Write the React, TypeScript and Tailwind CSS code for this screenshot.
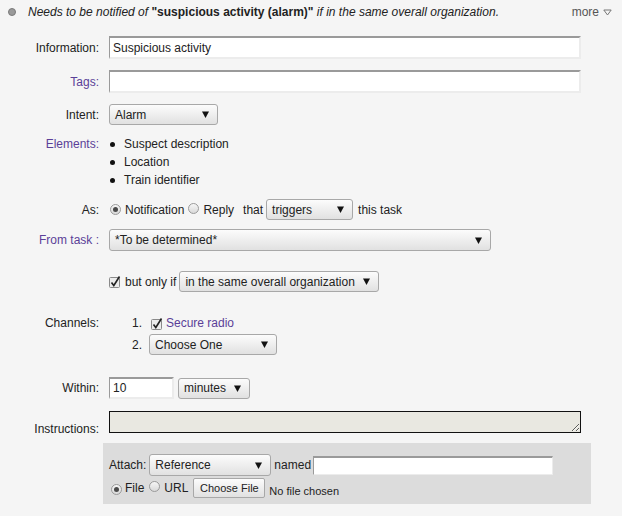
import clsx from "clsx";

const Arrow = () => (
  <svg width="7" height="7" viewBox="0 0 7 7" className="shrink-0">
    <path d="M0 0.5h7L3.5 7z" fill="#111" />
  </svg>
);

function Select({ text, className }: { text: string; className?: string }) {
  return (
    <div
      className={clsx(
        "flex shrink-0 items-center justify-between rounded-[3px] border border-[#a8a8a8] bg-linear-to-b from-[#fcfcfc] to-[#e1e1e1] pl-[5px] pr-[8px]",
        className
      )}
    >
      <span className="whitespace-nowrap">{text}</span>
      <Arrow />
    </div>
  );
}

function Radio({ checked = false }: { checked?: boolean }) {
  return (
    <span className="inline-flex h-[11px] w-[11px] shrink-0 items-center justify-center rounded-full border border-[#9a9a9a] bg-linear-to-b from-[#f6f6f6] to-[#d9d9d9]">
      {checked && <span className="h-[5px] w-[5px] rounded-full bg-[#4a4a4a]" />}
    </span>
  );
}

function Checkbox() {
  return (
    <svg width="13" height="13" viewBox="0 0 13 13" className="shrink-0">
      <rect x="0.5" y="2.5" width="10" height="10" rx="1" fill="#ececec" stroke="#8a8a8a" />
      <path d="M2.5 7.5l2.3 3L10.5 1.5" fill="none" stroke="#222" strokeWidth="1.6" />
    </svg>
  );
}

function TextInput({ value = "", className }: { value?: string; className?: string }) {
  return (
    <div
      className={clsx(
        "flex items-center border-t-2 border-l border-r-2 border-b-2 border-t-[#9a9a9a] border-l-[#9a9a9a] border-r-[#ececec] border-b-[#ececec] bg-white pl-[3px]",
        className
      )}
    >
      {value}
    </div>
  );
}

function Label({ children, purple = false }: { children: React.ReactNode; purple?: boolean }) {
  return (
    <div className={clsx("w-[99px] shrink-0 text-right", purple ? "text-[#5b3f98]" : "text-[#222]")}>
      {children}
    </div>
  );
}

export default function App() {
  return (
    <div className="h-[516px] w-[622px] overflow-hidden bg-[#f5f5f5] text-[12px] leading-[14px] text-[#222] [font-family:'Liberation_Sans',Arial,sans-serif]">
      {/* summary line */}
      <div className="flex h-[24px] items-center pl-[8px] pr-[10px]">
        <span className="h-[8px] w-[8px] shrink-0 rounded-full border border-[#7a7a7a] bg-[#9a9a9a]" />
        <span className="ml-[12px] italic">
          Needs to be notified of <b className="not-italic">"suspicious activity (alarm)"</b> if in the same
          overall organization.
        </span>
        <span className="ml-auto flex items-center gap-[4px] text-[#555]">
          more
          <svg width="9" height="7" viewBox="0 0 9 7">
            <path d="M0.8 1h7.4L4.5 6z" fill="none" stroke="#777" />
          </svg>
        </span>
      </div>

      <div className="mt-[12px] flex h-[23px] items-center">
        <Label>Information:</Label>
        <TextInput value="Suspicious activity" className="ml-[10px] h-[23px] w-[472px]" />
      </div>

      <div className="mt-[11px] flex h-[23px] items-center">
        <Label purple>Tags:</Label>
        <TextInput className="ml-[10px] h-[23px] w-[472px]" />
      </div>

      <div className="mt-[11px] flex h-[21px] items-center">
        <Label>Intent:</Label>
        <Select text="Alarm" className="ml-[10px] h-[21px] w-[109px]" />
      </div>

      <div className="mt-[10px] flex">
        <div className="flex h-[18px] items-center">
          <Label purple>Elements:</Label>
        </div>
        <ul className="ml-[10px]">
          {["Suspect description", "Location", "Train identifier"].map((item) => (
            <li key={item} className="flex h-[18px] items-center">
              <span className="ml-[1px] h-[5px] w-[5px] rounded-full bg-[#111]" />
              <span className="ml-[9px]">{item}</span>
            </li>
          ))}
        </ul>
      </div>

      <div className="mt-[10px] flex h-[21px] items-center">
        <Label>As:</Label>
        <div className="ml-[11px] flex items-center">
          <Radio checked />
          <span className="ml-[4px]">Notification</span>
          <span className="ml-[4px]">
            <Radio />
          </span>
          <span className="ml-[4px]">Reply</span>
          <span className="ml-[9px]">that</span>
          <Select text="triggers" className="ml-[3px] h-[21px] w-[87px]" />
          <span className="ml-[5px]">this task</span>
        </div>
      </div>

      <div className="mt-[9px] flex h-[22px] items-center">
        <Label purple>From task :</Label>
        <Select text="*To be determined*" className="ml-[10px] h-[22px] w-[382px]" />
      </div>

      <div className="mt-[20px] flex h-[21px] items-center">
        <div className="w-[99px] shrink-0" />
        <div className="ml-[10px] flex items-center">
          <Checkbox />
          <span className="ml-[3px]">but only if</span>
          <Select text="in the same overall organization" className="ml-[3px] h-[21px] w-[200px]" />
        </div>
      </div>

      <div className="mt-[22px] flex h-[18px] items-center">
        <Label>Channels:</Label>
        <span className="ml-[10px] w-[33px] text-right">1.</span>
        <span className="ml-[9px]">
          <Checkbox />
        </span>
        <span className="ml-[2px] text-[#5b3f98]">Secure radio</span>
      </div>
      <div className="mt-[2px] flex h-[21px] items-center">
        <div className="w-[99px] shrink-0" />
        <span className="ml-[10px] w-[33px] text-right">2.</span>
        <Select text="Choose One" className="ml-[7px] h-[21px] w-[128px]" />
      </div>

      <div className="mt-[22px] flex h-[22px] items-center">
        <Label>Within:</Label>
        <TextInput value="10" className="ml-[10px] h-[22px] w-[65px]" />
        <Select text="minutes" className="ml-[4px] h-[21px] w-[72px]" />
      </div>

      <div className="mt-[12px] flex items-end">
        <div className="-mb-[3px]">
          <Label>Instructions:</Label>
        </div>
        <textarea
          className="ml-[10px] block h-[22px] w-[472px] resize-y border border-[#111] bg-[#e9e8e1] outline-none"
          readOnly
        />
      </div>

      <div className="ml-[103px] mt-[10px] h-[61px] w-[488px] bg-[#dcdcdc] pl-[6px] pt-[11px]">
        <div className="flex h-[22px] items-center">
          <span>Attach:</span>
          <Select text="Reference" className="ml-[3px] h-[22px] w-[122px]" />
          <span className="ml-[3px]">named</span>
          <div className="ml-[2px] h-[19px] w-[240px] border-t-2 border-l border-r border-b border-t-[#9a9a9a] border-l-[#9a9a9a] border-r-[#ececec] border-b-[#ececec] bg-white" />
        </div>
        <div className="mt-[2px] flex h-[20px] items-center">
          <span className="ml-[2px]">
            <Radio checked />
          </span>
          <span className="ml-[3px]">File</span>
          <span className="ml-[5px]">
            <Radio />
          </span>
          <span className="ml-[4px]">URL</span>
          <span className="ml-[5px] flex h-[20px] w-[72px] items-center justify-center rounded-[2px] border border-[#a8a8a8] bg-linear-to-b from-[#fcfcfc] to-[#e1e1e1] text-[11px]">
            Choose File
          </span>
          <span className="ml-[4px] mt-[6px] text-[11px]">No file chosen</span>
        </div>
      </div>
    </div>
  );
}
